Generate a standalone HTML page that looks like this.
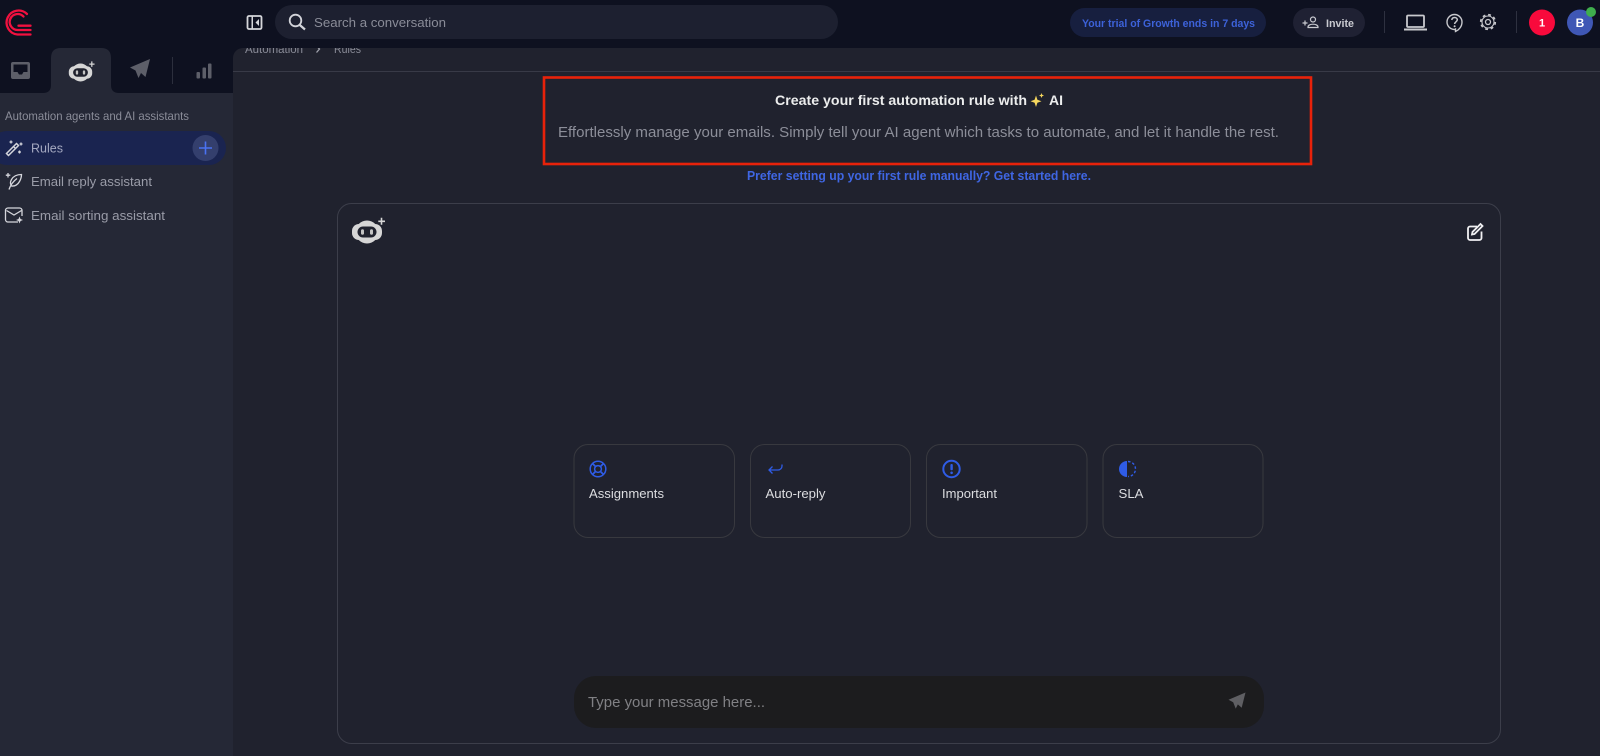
<!DOCTYPE html>
<html lang="en"><head><meta charset="utf-8"><title>Automation Rules</title>
<style>
html,body{margin:0;padding:0;width:1600px;height:756px;overflow:hidden;background:#20222e}
svg{display:block}
text{font-family:"Liberation Sans",sans-serif}
</style></head><body>
<svg width="1600" height="756" viewBox="0 0 1600 756" xmlns="http://www.w3.org/2000/svg">
<defs>
<g id="bot">
<circle cx="0" cy="0" r="11.500" fill="#d6d6d6"/>
<rect x="-15" y="-8" width="30" height="16" rx="7" fill="#d6d6d6"/>
<rect x="-9.500" y="-5.500" width="19" height="11" rx="5.500" fill="#20222e"/>
<rect x="-6" y="-2.800" width="3" height="5.600" rx="1.500" fill="#c4c4c4"/>
<rect x="3" y="-2.800" width="3" height="5.600" rx="1.500" fill="#c4c4c4"/>
<path d="M11.300-11.500h2.400v-2.700h1.600v2.700h2.700v1.600h-2.700v2.700h-1.600v-2.700h-2.400Z" fill="#d6d6d6"/>
</g>
<path id="plane" d="M10 -10L-10 -1.500-4.500 1.500-1.500 9 1 4 5.500 8Z"/>
</defs>

<!-- base -->
<rect width="1600" height="756" fill="#20222e"/>
<rect x="0" y="0" width="233" height="756" fill="#252836"/>

<!-- breadcrumb -->
<text x="245" y="53" font-size="12" fill="#8a8c98" textLength="58" lengthAdjust="spacingAndGlyphs">Automation</text>
<path d="M316.500 46l3 3-3 3.500" fill="none" stroke="#a0a2ac" stroke-width="1.300"/>
<text x="334" y="53" font-size="12" fill="#8a8c98" textLength="27" lengthAdjust="spacingAndGlyphs">Rules</text>

<rect width="1600" height="48" fill="#0e1120"/>
<rect y="48" width="233" height="45" fill="#0e1120"/>
<path d="M233 48h10a10 10 0 0 0-10 10Z" fill="#0e1120"/>
<rect x="233" y="71" width="1367" height="1" fill="#383a47"/>

<!-- active tab -->
<path d="M43 93q8 0 8-8V58q0-10 10-10h40q10 0 10 10v27q0 8 8 8Z" fill="#252836"/>

<!-- logo -->
<g fill="none" stroke="#f2113f" stroke-width="2.300" stroke-linecap="round">
<path d="M27 14A12 12 0 1 0 17.500 34.500H30.500"/>
<path d="M23.500 16.500A8 8 0 1 0 17.500 30H30.500"/>
<path d="M18.500 25.700H30.500"/>
</g>

<!-- tab icons -->
<path d="M13 62h15a2 2 0 0 1 2 2v13a2 2 0 0 1-2 2H13a2 2 0 0 1-2-2V64a2 2 0 0 1 2-2Zm0.500 2.500V72h4l1.500 2.500h3L23.500 72h4V64.500Z" fill="#5d5f69" fill-rule="evenodd"/>
<use href="#bot" transform="translate(80.500 72.500) scale(.78)"/>
<use href="#plane" transform="translate(140 69)" fill="#5d5f69"/>
<rect x="172" y="57" width="1" height="27" fill="#2c2f3d"/>
<g fill="#5d5f69">
<rect x="196.500" y="72" width="3.500" height="6.500" rx="1"/><rect x="202.500" y="67.500" width="3.500" height="11" rx="1"/><rect x="208" y="63.500" width="3.500" height="15" rx="1"/>
</g>

<!-- sidebar text -->
<text x="5" y="120" font-size="12" fill="#8b8d99" textLength="184" lengthAdjust="spacingAndGlyphs">Automation agents and AI assistants</text>
<rect x="-10" y="131" width="236" height="34" rx="17" fill="#1a2450"/>
<circle cx="205.500" cy="148" r="13" fill="#343f6d"/>
<path d="M205.500 141.500v13M199 148h13" stroke="#4a72f2" stroke-width="1.600"/>
<text x="31" y="152.500" font-size="13" fill="#a5a9c0" textLength="32" lengthAdjust="spacingAndGlyphs">Rules</text>
<text x="31" y="186" font-size="13" fill="#9a9ca8" textLength="121" lengthAdjust="spacingAndGlyphs">Email reply assistant</text>
<text x="31" y="220" font-size="13" fill="#9a9ca8" textLength="134" lengthAdjust="spacingAndGlyphs">Email sorting assistant</text>

<!-- sidebar icons -->
<g fill="none" stroke="#d5d6dc" stroke-width="1.300">
<path d="M8.500 155.500l-2-2 10-10 2 2Z" stroke-width="1.500"/>
<path d="M13.500 146.500l2 2"/>
<path d="M11 140.500v3M9.500 142h3M19.500 144h3M21 142.500v3M19.500 150.500v3M18 152h3"/>
<path d="M21.500 174.500c-4 0-8 1.500-10 5-1.500 2.500-1 5 0 6.500 3 .3 6-1 8-4.500 1.300-2.300 2-4.800 2-7Z"/>
<path d="M9 189.500c1.500-4.500 4-8 8-11"/>
<path d="M8 173v4.500M5.800 175.200h4.500"/>
<path d="M18 222H8a2.500 2.500 0 0 1-2.500-2.500V210.500A2.500 2.500 0 0 1 8 208h11.500a2.500 2.500 0 0 1 2.500 2.500V216"/>
<path d="M6.500 210.500l7.500 4.500 7.500-4.500"/>
<path d="M19.500 216.500l1 2.500 2.500 1-2.500 1-1 2.500-1-2.500-2.500-1 2.500-1Z" fill="#d5d6dc" stroke="none"/>
</g>

<!-- header -->
<rect x="247.500" y="16" width="14" height="13" rx="1.500" fill="none" stroke="#d5d6da" stroke-width="1.800"/>
<rect x="251.500" y="16" width="1.500" height="13" fill="#d5d6da"/>
<path d="M259 19v7l-3.500-3.500Z" fill="#d5d6da"/>

<rect x="275" y="5" width="563" height="34" rx="17" fill="#1d2030"/>
<circle cx="295.500" cy="20.500" r="5.800" fill="none" stroke="#d3d4da" stroke-width="1.800"/>
<path d="M299.800 25l5.200 4.500" stroke="#d3d4da" stroke-width="2.200"/>
<text x="314" y="27" font-size="13" fill="#8a8c98" textLength="132" lengthAdjust="spacingAndGlyphs">Search a conversation</text>

<rect x="1070" y="8" width="196" height="29" rx="14.500" fill="#171f3f"/>
<text x="1082" y="27" font-size="11" font-weight="700" fill="#3d62d9" textLength="173" lengthAdjust="spacingAndGlyphs">Your trial of Growth ends in 7 days</text>

<rect x="1293" y="8" width="72" height="29" rx="14.500" fill="#1f2133"/>
<g fill="none" stroke="#c9cad0" stroke-width="1.200">
<circle cx="1313" cy="19.500" r="2.500"/>
<path d="M1308 27.500v-.5c0-1.700 2.300-2.800 5-2.800s5 1.100 5 2.800v.5Z"/>
<path d="M1305 20.500v5M1302.500 23h5"/>
</g>
<text x="1326" y="27" font-size="11" font-weight="700" fill="#c9cad0" textLength="28" lengthAdjust="spacingAndGlyphs">Invite</text>

<rect x="1384" y="11" width="1" height="22" fill="#2e3140"/>
<g fill="none" stroke="#c8c9cd">
<rect x="1407" y="15.500" width="17" height="11.500" rx="1" stroke-width="1.800"/>
<path d="M1404 29.500h23" stroke-width="2"/>
<path d="M1455.500 29v2.500c3.500-1.500 6.500-5 6.500-9.500a7.500 7.500 0 1 0-7.500 7.500Z" stroke-width="1.400"/>
<path d="M1451.800 20c.2-1.600 1.300-2.500 2.800-2.500 1.600 0 2.700 1 2.700 2.300 0 2-2.700 2-2.700 4.200" stroke-width="1.500"/>
</g>
<circle cx="1454.600" cy="26.300" r="1" fill="#c8c9cd"/>
<circle cx="1488" cy="22" r="7.300" fill="none" stroke="#c8c9cd" stroke-width="1.600" stroke-dasharray="2.860 2.860"/>
<circle cx="1488" cy="22" r="6" fill="none" stroke="#c8c9cd" stroke-width="1.100"/>
<circle cx="1488" cy="22" r="2.500" fill="none" stroke="#c8c9cd" stroke-width="1.300"/>
<rect x="1516" y="11" width="1" height="22" fill="#2e3140"/>
<circle cx="1542" cy="22.500" r="13" fill="#f80a3c"/>
<text x="1542" y="26.500" font-size="11" font-weight="700" fill="#fff" text-anchor="middle">1</text>
<circle cx="1580" cy="22.500" r="13" fill="#3f57b5"/>
<text x="1580" y="27" font-size="12" font-weight="700" fill="#fff" text-anchor="middle">B</text>
<circle cx="1591" cy="12" r="5" fill="#3fae4d"/>

<!-- highlighted header box -->
<rect x="544" y="77.500" width="767" height="86.500" fill="none" stroke="#e8220a" stroke-width="2.600"/>
<text x="775" y="105" font-size="14" font-weight="700" fill="#eceded" textLength="252" lengthAdjust="spacingAndGlyphs">Create your first automation rule with</text>
<path d="M1036 95.500l1.400 4.200 4.100 1.500-4.100 1.500-1.400 4.300-1.400-4.300-4.100-1.500 4.100-1.500Z" fill="#f6d75e"/>
<path d="M1041.500 93l.7 1.700 1.800.8-1.800.8-.7 1.700-.7-1.700-1.800-.8 1.800-.8Z" fill="#f6d75e"/>
<text x="1049" y="105" font-size="14" font-weight="700" fill="#eceded" textLength="14" lengthAdjust="spacingAndGlyphs">AI</text>
<text x="558" y="137" font-size="15" fill="#8c8e99" textLength="721" lengthAdjust="spacingAndGlyphs">Effortlessly manage your emails. Simply tell your AI agent which tasks to automate, and let it handle the rest.</text>
<text x="747" y="180" font-size="13" font-weight="700" fill="#3f66e3" textLength="344" lengthAdjust="spacingAndGlyphs">Prefer setting up your first rule manually? Get started here.</text>

<!-- chat panel -->
<rect x="337.500" y="203.500" width="1163" height="540" rx="14" fill="#20222e" stroke="#3c3e4a"/>
<use href="#bot" transform="translate(367 232)"/>
<g fill="none" stroke="#f0f0f2" stroke-width="1.800" transform="translate(-6 -1.500)">
<path d="M1483 228h-7a2 2 0 0 0-2 2v9.500a2 2 0 0 0 2 2h9.500a2 2 0 0 0 2-2V233"/>
<path d="M1480.500 235.500l-2.500.5.500-2.500 8-8 2 2Z"/>
</g>

<!-- cards -->
<g fill="none" stroke="#38393f">
<rect x="574" y="444.500" width="160.500" height="93" rx="14"/>
<rect x="750.500" y="444.500" width="160" height="93" rx="14"/>
<rect x="926.500" y="444.500" width="160.500" height="93" rx="14"/>
<rect x="1103" y="444.500" width="160" height="93" rx="14"/>
</g>
<g fill="none" stroke="#2f5ce6" stroke-width="1.500">
<circle cx="598" cy="469" r="7.800"/>
<circle cx="598" cy="469" r="3.400"/>
<path d="M592.500 463.500l3 3M603.500 463.500l-3 3M592.500 474.500l3-3M603.500 474.500l-3-3" stroke-width="1.800"/>
<path d="M782 464.500v1.500a4 4 0 0 1-4 4h-8.500M772.500 466.500l-3.500 3.500 3.500 3.500" stroke-width="1.300"/>
<circle cx="951.500" cy="469" r="8.200" stroke-width="2"/>
<path d="M1128 461.500a7.500 7.500 0 0 1 0 15" stroke-dasharray="2.500 2" stroke-width="1.400"/>
</g>
<rect x="950.400" y="464" width="2.400" height="6.200" rx="1" fill="#2f5ce6"/>
<circle cx="951.600" cy="472.800" r="1.300" fill="#2f5ce6"/>
<path d="M1127 461a8 8 0 0 0 0 16Z" fill="#2f5ce6"/>
<g fill="#dcdde0">
<text x="589" y="498" font-size="13" textLength="75" lengthAdjust="spacingAndGlyphs">Assignments</text>
<text x="765.500" y="498" font-size="13" textLength="60" lengthAdjust="spacingAndGlyphs">Auto-reply</text>
<text x="942" y="498" font-size="13" textLength="55" lengthAdjust="spacingAndGlyphs">Important</text>
<text x="1118.500" y="498" font-size="13" textLength="25" lengthAdjust="spacingAndGlyphs">SLA</text>
</g>

<!-- input -->
<rect x="574" y="676" width="690" height="52" rx="22" fill="#1c1c1e"/>
<text x="588" y="707" font-size="15" fill="#808084" textLength="177" lengthAdjust="spacingAndGlyphs">Type your message here...</text>
<use href="#plane" transform="translate(1237 701) scale(.85)" fill="#5f5f63"/>
</svg>
</body></html>
